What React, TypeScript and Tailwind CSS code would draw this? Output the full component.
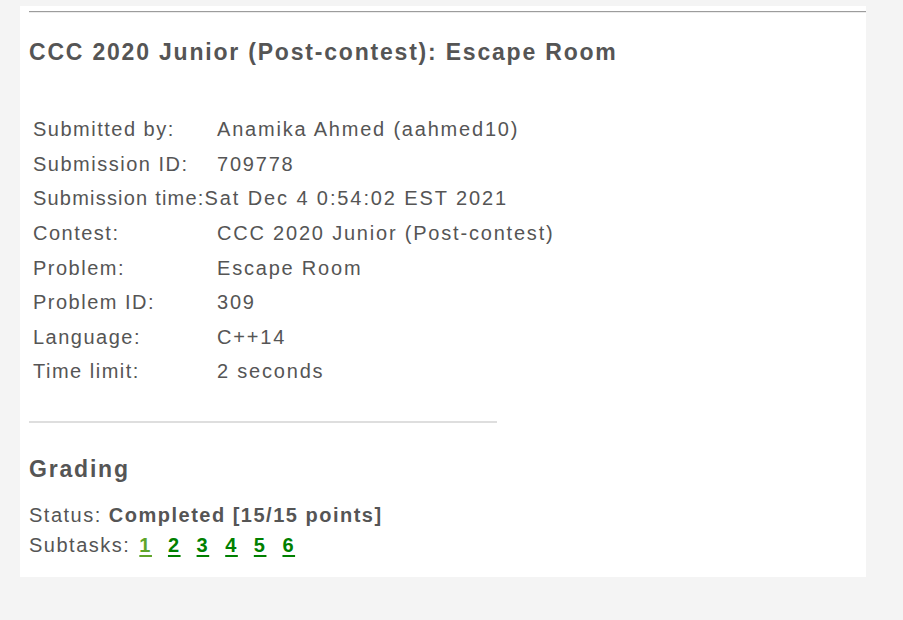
const details: { label: string; value: string }[] = [
  { label: 'Submitted by:', value: 'Anamika Ahmed (aahmed10)' },
  { label: 'Submission ID:', value: '709778' },
  { label: 'Submission time:', value: 'Sat Dec 4 0:54:02 EST 2021' },
  { label: 'Contest:', value: 'CCC 2020 Junior (Post-contest)' },
  { label: 'Problem:', value: 'Escape Room' },
  { label: 'Problem ID:', value: '309' },
  { label: 'Language:', value: 'C++14' },
  { label: 'Time limit:', value: '2 seconds' },
];

const subtasks = [1, 2, 3, 4, 5, 6];

export default function App() {
  return (
    <div className="min-h-[620px] w-full bg-[#f4f4f4] pt-[6px] font-['Liberation_Sans',Arial,sans-serif] text-[#555]">
      <div className="ml-[20px] w-[846px] bg-white pb-[17px] pl-[9px] pt-[5px]">
        <div className="h-[2px] border-t border-b border-t-[#9c9c9c] border-b-[#ececec]" />

        <h2 className="mt-[25px] text-[23px] font-bold leading-[28px] tracking-[1.8px]">
          CCC 2020 Junior (Post-contest): Escape Room
        </h2>

        <div className="mt-[46px] pl-[4px] text-[20px] tracking-[1.5px]">
          {details.map((row) =>
            row.label === 'Submission time:' ? (
              <div key={row.label} className="flex h-[34.6px] items-center whitespace-nowrap">
                <span className="tracking-[1.2px]">{row.label}</span>
                <span className="tracking-[1.9px]">{row.value}</span>
              </div>
            ) : (
              <div key={row.label} className="flex h-[34.6px] items-center whitespace-nowrap">
                <span className="w-[184px] shrink-0">{row.label}</span>
                <span className="tracking-[1.8px]">{row.value}</span>
              </div>
            )
          )}
        </div>

        <div className="mt-[32px] h-[2px] w-[468px] bg-[#dedede]" />

        <h3 className="mt-[32px] text-[23px] font-bold leading-[28px] tracking-[1.8px]">Grading</h3>

        <div className="mt-[17px] text-[20px] leading-[30px] tracking-[1.5px]">
          <div>
            Status: <span className="font-bold">Completed [15/15 points]</span>
          </div>
          <div className="flex items-baseline">
            <span>Subtasks:</span>
            <span className="ml-[9px] flex gap-[16px]">
              {subtasks.map((n) => (
                <a
                  key={n}
                  href="#"
                  className={
                    n === 1
                      ? 'font-bold text-[#5fa52a] underline underline-offset-[3px]'
                      : 'font-bold text-[#008000] underline underline-offset-[3px]'
                  }
                >
                  {n}
                </a>
              ))}
            </span>
          </div>
        </div>
      </div>
    </div>
  );
}
